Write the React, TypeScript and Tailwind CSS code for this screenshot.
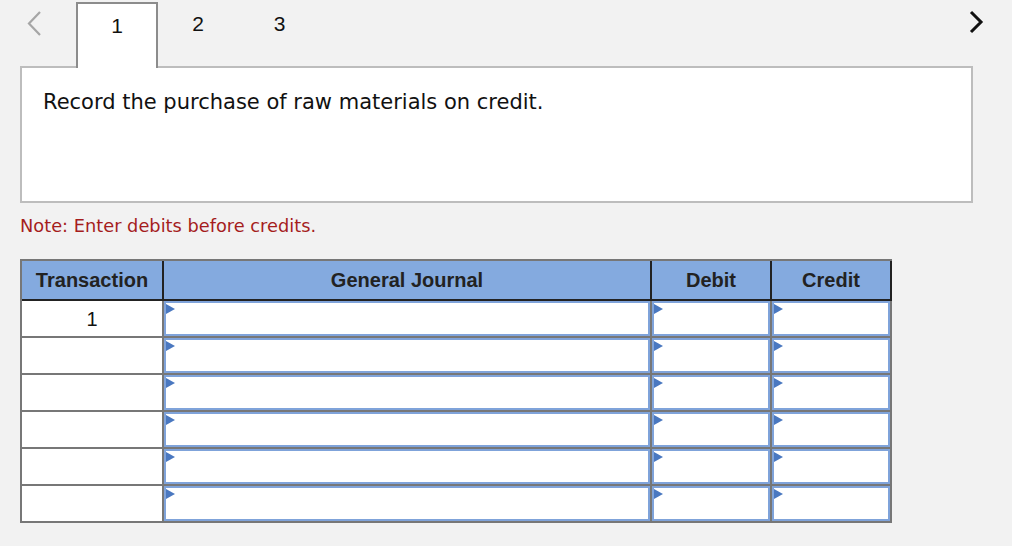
import React from "react";

const rows = [1, 2, 3, 4, 5, 6];

function Flag() {
  return (
    <svg className="absolute left-0 top-[1px]" width="9" height="10" viewBox="0 0 9 10">
      <path d="M0 0 L9 5 L0 10 Z" fill="#4a78c0" />
    </svg>
  );
}

function InputCell() {
  return (
    <div className="relative h-full border-2 border-[#7fa3da] bg-white">
      <Flag />
    </div>
  );
}

export default function App() {
  return (
    <div className="w-[1012px] h-[546px] bg-[#f2f2f2] relative overflow-hidden" style={{ fontFamily: "'DejaVu Sans', Verdana, sans-serif" }}>
      {/* tab strip */}
      <div className="flex items-start h-[66px] pt-[2px]">
        <div className="w-[76px] flex pl-[25px] pt-[9px]">
          <svg width="18" height="26" viewBox="0 0 18 26">
            <path d="M15 1 L4 12.5 L15 24" fill="none" stroke="#a6a6a6" strokeWidth="2.2" />
          </svg>
        </div>
        <div className="relative z-10 w-[82px] h-[66px] border-2 border-b-0 border-[#8c8c8c] bg-white flex justify-center pt-[10px] text-[21px] leading-[24px] text-[#111] font-['Liberation_Sans',Arial,sans-serif]">
          1
        </div>
        <div className="w-[80px] flex justify-center pt-[10px] text-[21px] leading-[24px] text-[#111] font-['Liberation_Sans',Arial,sans-serif]">2</div>
        <div className="w-[83px] flex justify-center pt-[10px] text-[21px] leading-[24px] text-[#111] font-['Liberation_Sans',Arial,sans-serif]">3</div>
        <div className="flex-1" />
        <div className="w-[44px] pt-[8px]">
          <svg width="18" height="26" viewBox="0 0 18 26">
            <path d="M3 2 L13 12 L3 22" fill="none" stroke="#111" strokeWidth="3" />
          </svg>
        </div>
      </div>

      {/* question box */}
      <div className="ml-[20px] w-[953px] h-[137px] border-2 border-[#bdbdbd] bg-white pl-[21px] pt-[22px] text-[21px] leading-[24px] text-[#111]">
        Record the purchase of raw materials on credit.
      </div>

      <div className="ml-[20px] mt-[12px] text-[17.8px] leading-[22px] text-[#a51d1d]">Note: Enter debits before credits.</div>

      {/* journal table */}
      <div className="ml-[20px] mt-[22px] w-[872px] font-['Liberation_Sans',Arial,sans-serif]">
        <div className="grid grid-cols-[140px_486px_118px_118px] gap-x-[2px] bg-[#222] border-t-2 border-l-2 border-[#777] pr-[2px] pb-[2px]">
          {["Transaction", "General Journal", "Debit", "Credit"].map((h) => (
            <div key={h} className="h-[38px] bg-[#84aadf] flex items-center justify-center text-[20px] font-bold text-[#222]">
              {h}
            </div>
          ))}
        </div>
        <div className="grid grid-cols-[140px_486px_118px_118px] gap-[2px] bg-[#777] px-[2px] pb-[2px]">
          {rows.map((r) => (
            <React.Fragment key={r}>
              <div className="h-[35px] bg-white flex items-center justify-center text-[20px] text-[#111]">
                {r === 1 ? "1" : ""}
              </div>
              <InputCell />
              <InputCell />
              <InputCell />
            </React.Fragment>
          ))}
        </div>
      </div>
    </div>
  );
}
